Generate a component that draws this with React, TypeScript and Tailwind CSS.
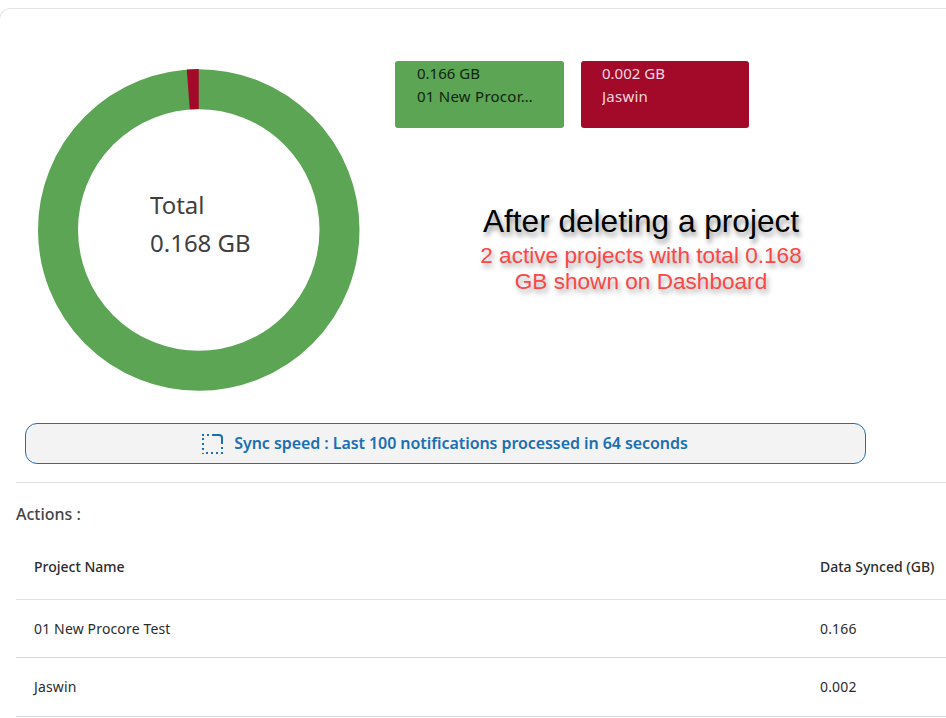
import React from "react";

const UI_FONT = "font-['Noto_Sans',sans-serif]";

const rows = [
  { name: "01 New Procore Test", synced: "0.166" },
  { name: "Jaswin", synced: "0.002" },
];

const Donut: React.FC = () => (
  <div className="relative w-[322px] h-[322px]">
    <svg width="322" height="322" viewBox="0 0 322 322">
      <circle cx="160.75" cy="161" r="140.75" fill="none" stroke="#5ba554" strokeWidth="40" />
      <path d="M160.75 0 L148.75 0.45 L151.75 40.3 L160.75 40 Z" fill="#a30a2a" />
    </svg>
    <div className="absolute left-[112px] top-[117px] text-[24px] leading-[38px] text-[#3f3f3f]">
      <div>Total</div>
      <div>0.168 GB</div>
    </div>
  </div>
);

const LegendCard: React.FC<{ value: string; name: string; className: string }> = ({
  value,
  name,
  className,
}) => (
  <div className={`h-[67px] rounded-[3px] text-[15px] leading-[23px] pt-px ${className}`}>
    <div>{value}</div>
    <div className="truncate tracking-[0.25px]">{name}</div>
  </div>
);

export default function App() {
  return (
    <div className={`w-[946px] h-[718px] overflow-hidden bg-white pt-2 ${UI_FONT}`}>
      <div className="-ml-px h-full border-t border-l border-[#e3e3e3] rounded-tl-xl pl-[16px]">
        <div className="flex h-[414px]">
          <div className="pt-[60px] pl-[22px]">
            <Donut />
          </div>
          <div className="pl-[35px] pt-[52px]">
            <div className="flex gap-[17px]">
              <LegendCard value="0.166 GB" name="01 New Procor…" className="w-[169px] bg-[#5ba554] text-[#12240f] px-[22px]" />
              <LegendCard value="0.002 GB" name="Jaswin" className="w-[168px] bg-[#a30a2a] text-[#f8d7e0] px-[21px]" />
            </div>
            <div className="w-[340px] ml-[76px] mt-[75px] text-center font-['Liberation_Sans',sans-serif]">
              <div className="text-[31.6px] leading-[36px] text-black [text-shadow:2px_4px_5px_rgba(0,0,0,0.45)]">
                After deleting a project
              </div>
              <div className="mt-[4px] text-[22.6px] leading-[26px] text-[#fb4747] [text-shadow:2px_4px_5px_rgba(0,0,0,0.35)]">
                2 active projects with total 0.168 GB shown on Dashboard
              </div>
            </div>
          </div>
        </div>

        <div className="ml-[9px] w-[841px] h-[41px] pr-[2px] flex items-center justify-center gap-[11px] rounded-xl border border-[#1f6fb2] bg-[#f3f3f3] text-[16px] leading-[20px] font-semibold tracking-[-0.07px] text-[#1a6fb5]">
          <svg width="22" height="22" viewBox="0 0 22 22" fill="none" stroke="#1a6fb5" strokeWidth="2">
            <path d="M11 2 H18 A3 3 0 0 1 21 5 V11" />
            <path d="M1 2 H9 M2 5 V21 M5 20 H21 M21 14 V21" strokeDasharray="2 3" />
          </svg>
          <span className="-mt-[2px]">Sync speed : Last 100 notifications processed in 64 seconds</span>
        </div>

        <div className="mt-[18px] border-t border-[#e2e2e2] pt-[20px]">
          <div className="text-[16px] leading-[22px] font-medium text-[#444]">Actions :</div>
          <table className="w-full mt-[10px] text-[14px] text-[#2c2c2c] border-collapse">
            <thead>
              <tr className="h-[64px] border-b border-[#dfe2e5]">
                <th className="pl-[18px] text-left font-medium">Project Name</th>
                <th className="w-[126px] text-left font-medium whitespace-nowrap">Data Synced (GB)</th>
              </tr>
            </thead>
            <tbody className="tracking-[0.15px]">
              {rows.map((r) => (
                <tr key={r.name} className="h-[58px] last:h-[59px] border-b border-[#d3dade]">
                  <td className="pl-[18px]">{r.name}</td>
                  <td>{r.synced}</td>
                </tr>
              ))}
            </tbody>
          </table>
        </div>
      </div>
    </div>
  );
}
